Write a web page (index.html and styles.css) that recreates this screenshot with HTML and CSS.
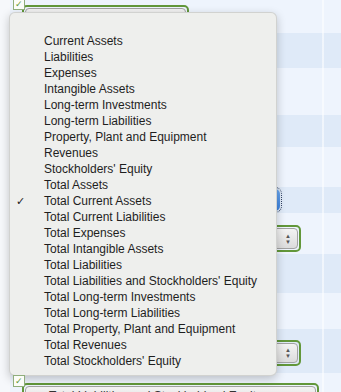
FILE: index.html
```html
<!DOCTYPE html>
<html lang="en">

<head>
    <meta charset="UTF-8">
    <meta name="viewport" content="width=device-width, initial-scale=1.0">
    <title>Statement Line Picker</title>
    <link rel="stylesheet" href="styles.css">
</head>

<body>
    <div class="sheet">
        <!-- rows of the form behind the open menu -->
        <div class="row light r1">
            <span class="check">&#10003;</span>
            <div class="pick pick-top">
                <div class="pick-inner"></div>
            </div>
        </div>
        <div class="row blue r2"></div>
        <div class="row light r3"></div>
        <div class="row blue r4"></div>
        <div class="row light r5"></div>
        <div class="row blue r6">
            <div class="go"></div>
        </div>
        <div class="row light r7">
            <div class="pick pick-mid">
                <div class="pick-inner"><span class="arrows">&#9650;<br>&#9660;</span></div>
            </div>
        </div>
        <div class="row blue r8"></div>
        <div class="row light r9"></div>
        <div class="row blue r10">
            <div class="pick pick-mid">
                <div class="pick-inner"><span class="arrows">&#9650;<br>&#9660;</span></div>
            </div>
        </div>
        <div class="row light r11">
            <span class="check">&#10003;</span>
            <div class="pick pick-wide">
                <div class="pick-inner">
                    <span class="pick-label">Total Liabilities and Stockholders' Equity</span>
                    <span class="arrows">&#9650;</span>
                </div>
            </div>
        </div>
    </div>

    <!-- the open popup menu -->
    <ul class="menu">
        <li>Current Assets</li>
        <li>Liabilities</li>
        <li>Expenses</li>
        <li>Intangible Assets</li>
        <li>Long-term Investments</li>
        <li>Long-term Liabilities</li>
        <li>Property, Plant and Equipment</li>
        <li>Revenues</li>
        <li>Stockholders' Equity</li>
        <li>Total Assets</li>
        <li class="picked">Total Current Assets</li>
        <li>Total Current Liabilities</li>
        <li>Total Expenses</li>
        <li>Total Intangible Assets</li>
        <li>Total Liabilities</li>
        <li>Total Liabilities and Stockholders' Equity</li>
        <li>Total Long-term Investments</li>
        <li>Total Long-term Liabilities</li>
        <li>Total Property, Plant and Equipment</li>
        <li>Total Revenues</li>
        <li>Total Stockholders' Equity</li>
    </ul>
</body>

</html>
```

FILE: styles.css
```css
:root {
    --light-row: #eef4fd;
    --blue-row: #dfeaf8;
    --green: #62973a;
    --menu-bg: #eeefed;
    --text-color: #1e1e1e;
}

body {
    margin: 0;
    font-family: "Liberation Sans", Arial, Helvetica, sans-serif;
    background-color: var(--light-row);
    overflow: hidden;
}

.sheet {
    width: 341px;
    height: 392px;
    overflow: hidden;
}

.row {
    position: relative;
    box-sizing: border-box;
    border-left: 10px solid #f6f8fb;
    background-image: linear-gradient(to right, transparent 312px, rgba(255, 255, 255, 0.55) 312px, rgba(255, 255, 255, 0.55) 314px, transparent 314px);
}

.light {
    background-color: var(--light-row);
}

.blue {
    background-color: var(--blue-row);
}

.r1 { height: 33px; padding-top: 5px; }
.r2 { height: 35px; }
.r3 { height: 47px; }
.r4 { height: 32px; }
.r5 { height: 40px; }
.r6 { height: 26px; padding-top: 2px; }
.r7 { height: 41px; padding-top: 12px; }
.r8 { height: 39px; }
.r9 { height: 36px; }
.r10 { height: 44px; padding-top: 11px; }
.r11 { height: 19px; padding-top: 10px; overflow: hidden; }

.check {
    position: absolute;
    left: 3px;
    width: 10px;
    height: 10px;
    border: 1px solid #8fae7c;
    background-color: #fbfdf8;
    color: var(--green);
    font-size: 9px;
    line-height: 10px;
    text-align: center;
    z-index: 1;
}

.r1 .check {
    top: -2px;
}

.r11 .check {
    top: 2px;
}

.pick {
    box-sizing: border-box;
    border: 2px solid var(--green);
    border-radius: 5px;
    padding: 1px;
}

.pick-inner {
    display: flex;
    align-items: center;
    height: 100%;
    box-sizing: border-box;
    border: 1px solid #a2a2a2;
    border-radius: 4px;
    background: linear-gradient(#f3f3f3, #dcdcdc);
    padding: 0 6px 0 23px;
}

.pick-top {
    margin-left: 12px;
    width: 167px;
    height: 26px;
}

.pick-mid {
    margin-left: 120px;
    width: 171px;
    height: 27px;
}

.r10 .pick-mid {
    height: 26px;
}

.pick-wide {
    margin-left: 12px;
    width: 297px;
    height: 26px;
}

.pick-label {
    font-size: 12px;
    color: #333;
}

.arrows {
    margin-left: auto;
    font-size: 6px;
    line-height: 6px;
    color: #555;
    text-align: center;
}

.go {
    margin-left: 160px;
    width: 110px;
    height: 22px;
    box-sizing: border-box;
    border-radius: 5px;
    background: linear-gradient(#6aa8f0, #3b82e0);
    outline: 1px dotted #334466;
    outline-offset: 1px;
}

.menu {
    position: absolute;
    left: 9px;
    top: 12px;
    width: 268px;
    height: 364px;
    box-sizing: border-box;
    margin: 0;
    padding: 20px 0 0;
    list-style: none;
    background-color: var(--menu-bg);
    border: 1px solid rgba(0, 0, 0, 0.12);
    border-radius: 6px;
    box-shadow: 0 3px 10px rgba(0, 0, 0, 0.22);
}

.menu li {
    position: relative;
    height: 16px;
    padding-left: 34px;
    font-size: 12px;
    line-height: 16px;
    color: var(--text-color);
    white-space: nowrap;
}

.menu li.picked::before {
    content: "\2713";
    position: absolute;
    left: 6px;
    font-size: 11px;
}
```
